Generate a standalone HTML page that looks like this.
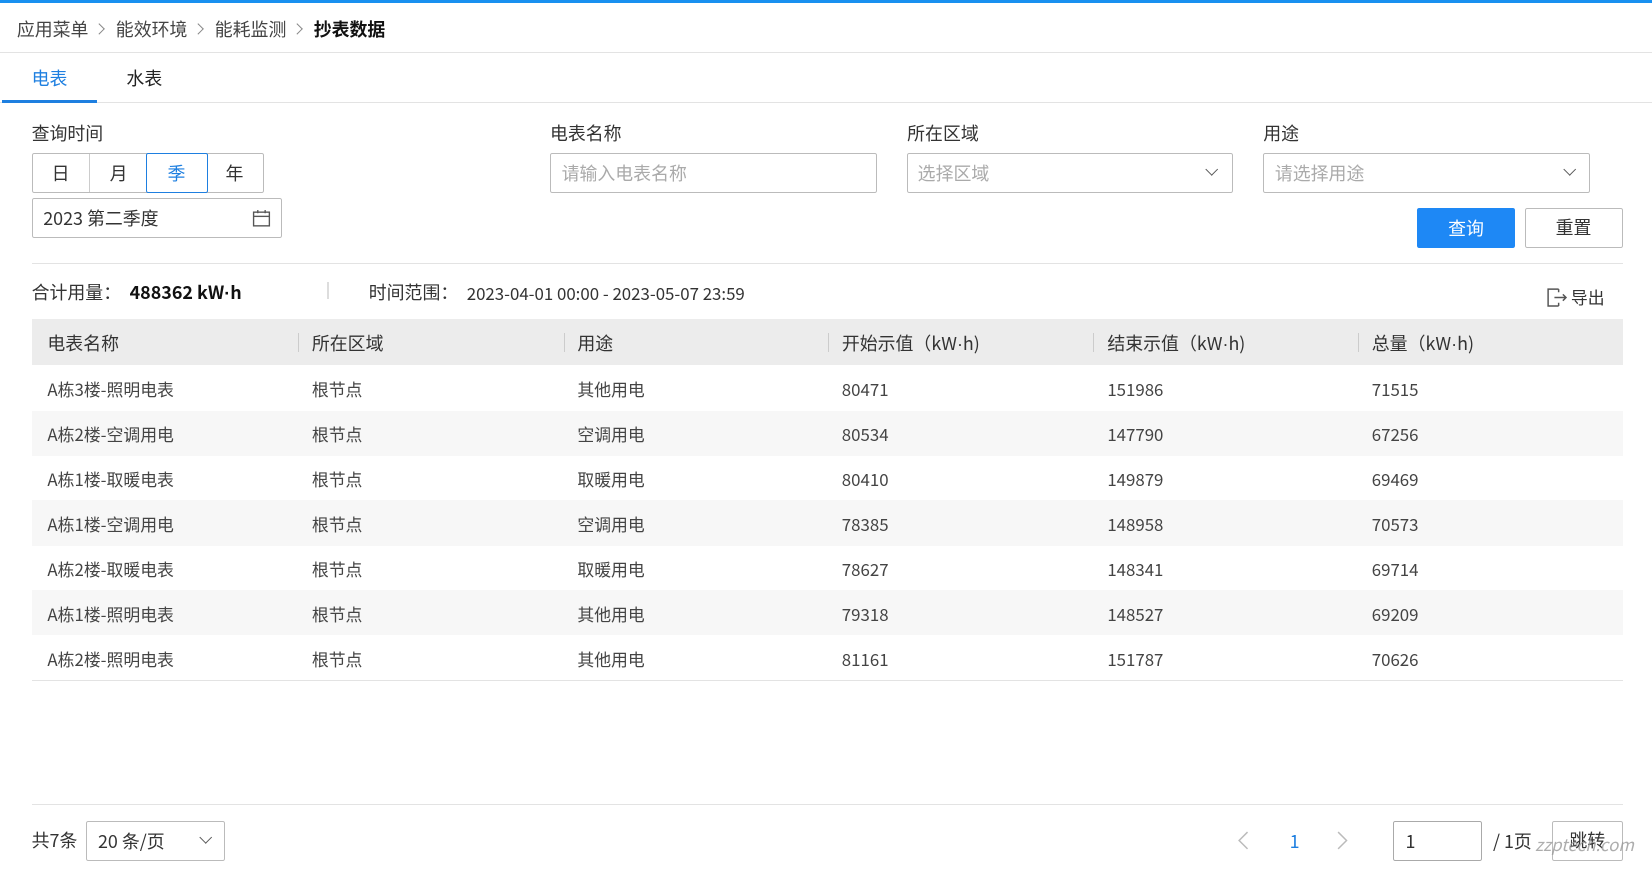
<!DOCTYPE html>
<html><head><meta charset="utf-8"><style>
html,body{margin:0;padding:0;background:#fff;overflow:hidden;width:1652px;height:870px}
#w{width:1568px;height:826px;position:relative;zoom:1.0536;font-family:"Noto Sans CJK SC","Liberation Sans",sans-serif;color:#333;font-size:17px}
.a{position:absolute;white-space:nowrap}
.box{position:absolute;border:1px solid #bbb;border-radius:2px;box-sizing:border-box;background:#fff}
.ph{color:#aaa}
.ln{position:absolute;background:#e3e3e3;height:1px}
.chev{position:absolute;width:8px;height:8px;border-right:1.5px solid #555;border-bottom:1.5px solid #555;transform:rotate(45deg)}
.row{position:absolute;left:30px;width:1510px;height:43px}
.row span{position:absolute;top:10px;font-size:16px;color:#444}
.d{font-family:"Liberation Sans",sans-serif}
.sep{display:inline-block;width:7px;height:7px;border-right:1.3px solid #888;border-top:1.3px solid #888;transform:rotate(45deg);margin:0 12px 2px 6px}
</style></head><body><div id="w">
<div class="a" style="left:0;top:0;width:1568px;height:3px;background:#1890f0"></div>
<div class="a" style="left:16px;top:15px;color:#444">应用菜单<span class="sep"></span>能效环境<span class="sep"></span>能耗监测<span class="sep"></span><b style="color:#111">抄表数据</b></div>
<div class="ln" style="left:0;top:49px;width:1568px"></div>
<div class="a" style="left:30px;top:62px;color:#1e7fe0">电表</div>
<div class="a" style="left:120px;top:62px;color:#222">水表</div>
<div class="ln" style="left:0;top:97px;width:1568px"></div>
<div class="a" style="left:2px;top:95px;width:90px;height:3px;background:#1e7fe0"></div>

<div class="a" style="left:30px;top:114px">查询时间</div>
<div class="a" style="left:522px;top:114px">电表名称</div>
<div class="a" style="left:861px;top:114px">所在区域</div>
<div class="a" style="left:1199px;top:114px">用途</div>

<div class="box" style="left:30px;top:145px;width:221px;height:38px"></div>
<div class="a" style="left:84px;top:146px;width:1px;height:36px;background:#ccc"></div>
<div class="a" style="left:196px;top:146px;width:1px;height:36px;background:#ccc"></div>
<div class="box" style="left:139px;top:145px;width:58px;height:38px;border-color:#1e7fe0"></div>
<div class="a" style="left:49px;top:152px">日</div>
<div class="a" style="left:104px;top:152px">月</div>
<div class="a" style="left:159px;top:152px;color:#1e7fe0">季</div>
<div class="a" style="left:214px;top:152px">年</div>

<div class="box" style="left:30px;top:188px;width:238px;height:38px"></div>
<div class="a" style="left:41px;top:195px">2023 第二季度</div>
<svg class="a" style="left:239px;top:198px" width="18" height="18" viewBox="0 0 18 18"><rect x="1.5" y="3" width="15" height="13" fill="none" stroke="#555" stroke-width="1.3"/><line x1="1.5" y1="7" x2="16.5" y2="7" stroke="#555" stroke-width="1.3"/><line x1="5.5" y1="1" x2="5.5" y2="4" stroke="#555" stroke-width="1.3"/><line x1="12.5" y1="1" x2="12.5" y2="4" stroke="#555" stroke-width="1.3"/></svg>

<div class="box" style="left:522px;top:145px;width:310px;height:38px"></div>
<div class="a ph" style="left:533px;top:152px">请输入电表名称</div>
<div class="box" style="left:861px;top:145px;width:309px;height:38px"></div>
<div class="a ph" style="left:871px;top:152px">选择区域</div>
<div class="chev" style="left:1146px;top:157px"></div>
<div class="box" style="left:1199px;top:145px;width:310px;height:38px"></div>
<div class="a ph" style="left:1210px;top:152px">请选择用途</div>
<div class="chev" style="left:1485px;top:157px"></div>

<div class="a" style="left:1345px;top:197px;width:93px;height:38px;background:#1e88f5;border-radius:2px;color:#fff;text-align:center;line-height:38px">查询</div>
<div class="box" style="left:1447px;top:197px;width:93px;height:38px;text-align:center;line-height:36px">重置</div>

<div class="ln" style="left:30px;top:250px;width:1510px"></div>
<div class="a" style="left:30px;top:265px">合计用量：</div>
<div class="a" style="left:123px;top:265px;font-weight:bold;color:#111">488362 kW<span class="d">·</span>h</div>
<div class="a" style="left:310px;top:268px;width:2px;height:16px;background:#ddd"></div>
<div class="a" style="left:350px;top:265px">时间范围：</div>
<div class="a" style="left:443px;top:266px;font-size:16px">2023-04-01 00:00 - 2023-05-07 23:59</div>
<svg class="a" style="left:1467px;top:272px" width="22" height="20" viewBox="0 0 22 20"><path d="M12 2H2v16h10M12 15v3M12 2v3M8 10h11M16 7l3 3-3 3" fill="none" stroke="#555" stroke-width="1.4"/></svg>
<div class="a" style="left:1491px;top:270px;font-size:16px">导出</div>

<div class="a" style="left:30px;top:303px;width:1510px;height:43px;background:#ececec"></div>
<div class="a" style="left:45px;top:313px">电表名称</div>
<div class="a" style="left:296px;top:313px">所在区域</div>
<div class="a" style="left:548px;top:313px">用途</div>
<div class="a" style="left:799px;top:313px">开始示值（kW<span class="d">·</span>h)</div>
<div class="a" style="left:1051px;top:313px">结束示值（kW<span class="d">·</span>h)</div>
<div class="a" style="left:1302px;top:313px">总量（kW<span class="d">·</span>h)</div>
<div class="a" style="left:283px;top:316px;width:1px;height:18px;background:#ccc"></div>
<div class="a" style="left:535px;top:316px;width:1px;height:18px;background:#ccc"></div>
<div class="a" style="left:786px;top:316px;width:1px;height:18px;background:#ccc"></div>
<div class="a" style="left:1037px;top:316px;width:1px;height:18px;background:#ccc"></div>
<div class="a" style="left:1289px;top:316px;width:1px;height:18px;background:#ccc"></div>

<div class="row" style="top:347px"><span style="left:15px">A栋3楼-照明电表</span><span style="left:266px">根节点</span><span style="left:518px">其他用电</span><span style="left:769px">80471</span><span style="left:1021px">151986</span><span style="left:1272px">71515</span></div>
<div class="row" style="top:390px;background:#f7f7f7"><span style="left:15px">A栋2楼-空调用电</span><span style="left:266px">根节点</span><span style="left:518px">空调用电</span><span style="left:769px">80534</span><span style="left:1021px">147790</span><span style="left:1272px">67256</span></div>
<div class="row" style="top:432px"><span style="left:15px">A栋1楼-取暖电表</span><span style="left:266px">根节点</span><span style="left:518px">取暖用电</span><span style="left:769px">80410</span><span style="left:1021px">149879</span><span style="left:1272px">69469</span></div>
<div class="row" style="top:475px;background:#f7f7f7"><span style="left:15px">A栋1楼-空调用电</span><span style="left:266px">根节点</span><span style="left:518px">空调用电</span><span style="left:769px">78385</span><span style="left:1021px">148958</span><span style="left:1272px">70573</span></div>
<div class="row" style="top:518px"><span style="left:15px">A栋2楼-取暖电表</span><span style="left:266px">根节点</span><span style="left:518px">取暖用电</span><span style="left:769px">78627</span><span style="left:1021px">148341</span><span style="left:1272px">69714</span></div>
<div class="row" style="top:560px;background:#f7f7f7"><span style="left:15px">A栋1楼-照明电表</span><span style="left:266px">根节点</span><span style="left:518px">其他用电</span><span style="left:769px">79318</span><span style="left:1021px">148527</span><span style="left:1272px">69209</span></div>
<div class="row" style="top:603px"><span style="left:15px">A栋2楼-照明电表</span><span style="left:266px">根节点</span><span style="left:518px">其他用电</span><span style="left:769px">81161</span><span style="left:1021px">151787</span><span style="left:1272px">70626</span></div>
<div class="ln" style="left:30px;top:645px;width:1510px"></div>

<div class="ln" style="left:30px;top:763px;width:1510px"></div>
<div class="a" style="left:30px;top:785px">共7条</div>
<div class="box" style="left:82px;top:779px;width:132px;height:38px"></div>
<div class="a" style="left:93px;top:786px">20 条/页</div>
<div class="chev" style="left:191px;top:791px"></div>
<svg class="a" style="left:1174px;top:789px" width="12" height="18" viewBox="0 0 12 18"><path d="M10 1L2 9l8 8" fill="none" stroke="#bbb" stroke-width="1.4"/></svg>
<div class="a" style="left:1224px;top:786px;color:#1e7fe0">1</div>
<svg class="a" style="left:1268px;top:789px" width="12" height="18" viewBox="0 0 12 18"><path d="M2 1l8 8-8 8" fill="none" stroke="#bbb" stroke-width="1.4"/></svg>
<div class="box" style="left:1322px;top:779px;width:85px;height:38px;border-color:#aaa"></div>
<div class="a" style="left:1334px;top:786px">1</div>
<div class="a" style="left:1417px;top:786px">/ 1页</div>
<div class="box" style="left:1473px;top:779px;width:67px;height:38px;text-align:center;line-height:36px">跳转</div>
<div class="a" style="left:1457px;top:789px;color:#999;font-style:italic;font-size:16px;opacity:.8">zzptech.com</div>
</div></body></html>
